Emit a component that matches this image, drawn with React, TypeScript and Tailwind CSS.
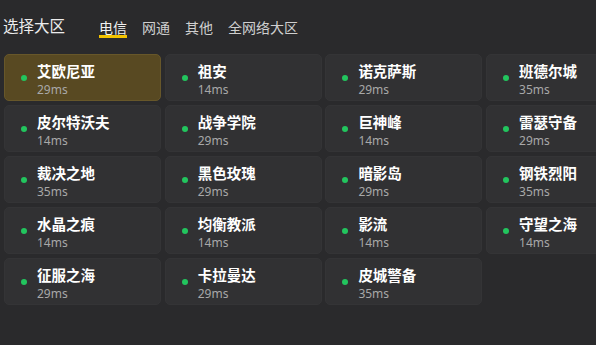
import React, { useState } from 'react';

const tabs = ['电信', '网通', '其他', '全网络大区'];

const servers = [
  { name: '艾欧尼亚', ping: 29 },
  { name: '祖安', ping: 14 },
  { name: '诺克萨斯', ping: 29 },
  { name: '班德尔城', ping: 35 },
  { name: '皮尔特沃夫', ping: 14 },
  { name: '战争学院', ping: 29 },
  { name: '巨神峰', ping: 14 },
  { name: '雷瑟守备', ping: 29 },
  { name: '裁决之地', ping: 35 },
  { name: '黑色玫瑰', ping: 29 },
  { name: '暗影岛', ping: 29 },
  { name: '钢铁烈阳', ping: 35 },
  { name: '水晶之痕', ping: 14 },
  { name: '均衡教派', ping: 14 },
  { name: '影流', ping: 14 },
  { name: '守望之海', ping: 14 },
  { name: '征服之海', ping: 29 },
  { name: '卡拉曼达', ping: 29 },
  { name: '皮城警备', ping: 35 },
];

function App() {
  const [activeTab, setActiveTab] = useState('电信');
  const [selected, setSelected] = useState('艾欧尼亚');

  return (
    <div
      className="h-screen w-full overflow-hidden bg-[#2a2a2c]"
      style={{ fontFamily: '"Noto Sans", "Noto Sans CJK SC", sans-serif' }}
    >
      {/* Header */}
      <div className="flex h-[52px] items-center px-[3px]">
        <h1 className="text-[15.5px] leading-[20px] text-[#ececec]">选择大区</h1>
        <div className="ml-[34px] mt-[5px] flex gap-[15px]">
          {tabs.map((t) => (
            <button
              key={t}
              onClick={() => setActiveTab(t)}
              className={`border-b-[3px] text-[14px] leading-[15px] ${
                activeTab === t ? 'border-[#f2c200] text-[#f0f0f0]' : 'border-transparent text-[#cfcfcf]'
              }`}
            >
              {t}
            </button>
          ))}
        </div>
      </div>

      {/* Server grid */}
      <div className="mt-[2px] grid grid-cols-[repeat(4,157px)] gap-x-[3.7px] gap-y-[4px] px-[4px]">
        {servers.map((s) => (
          <button
            key={s.name}
            onClick={() => setSelected(s.name)}
            className={`flex h-[47px] items-center rounded-[5px] border pl-[16px] text-left ${
              selected === s.name ? 'border-[#67572a] bg-[#584922]' : 'border-[#343436] bg-[#313133]'
            }`}
          >
            <span className="h-[6px] w-[6px] shrink-0 rounded-full bg-[#22c55e]" />
            <div className="ml-[10px] flex flex-col pt-[5px]">
              <span className="text-[14.5px] font-bold leading-[17px] text-white">{s.name}</span>
              <span className="mt-[2px] text-[12px] leading-[16px] text-[#a8a8a8]">{s.ping}ms</span>
            </div>
          </button>
        ))}
      </div>
    </div>
  );
}

export default App;
